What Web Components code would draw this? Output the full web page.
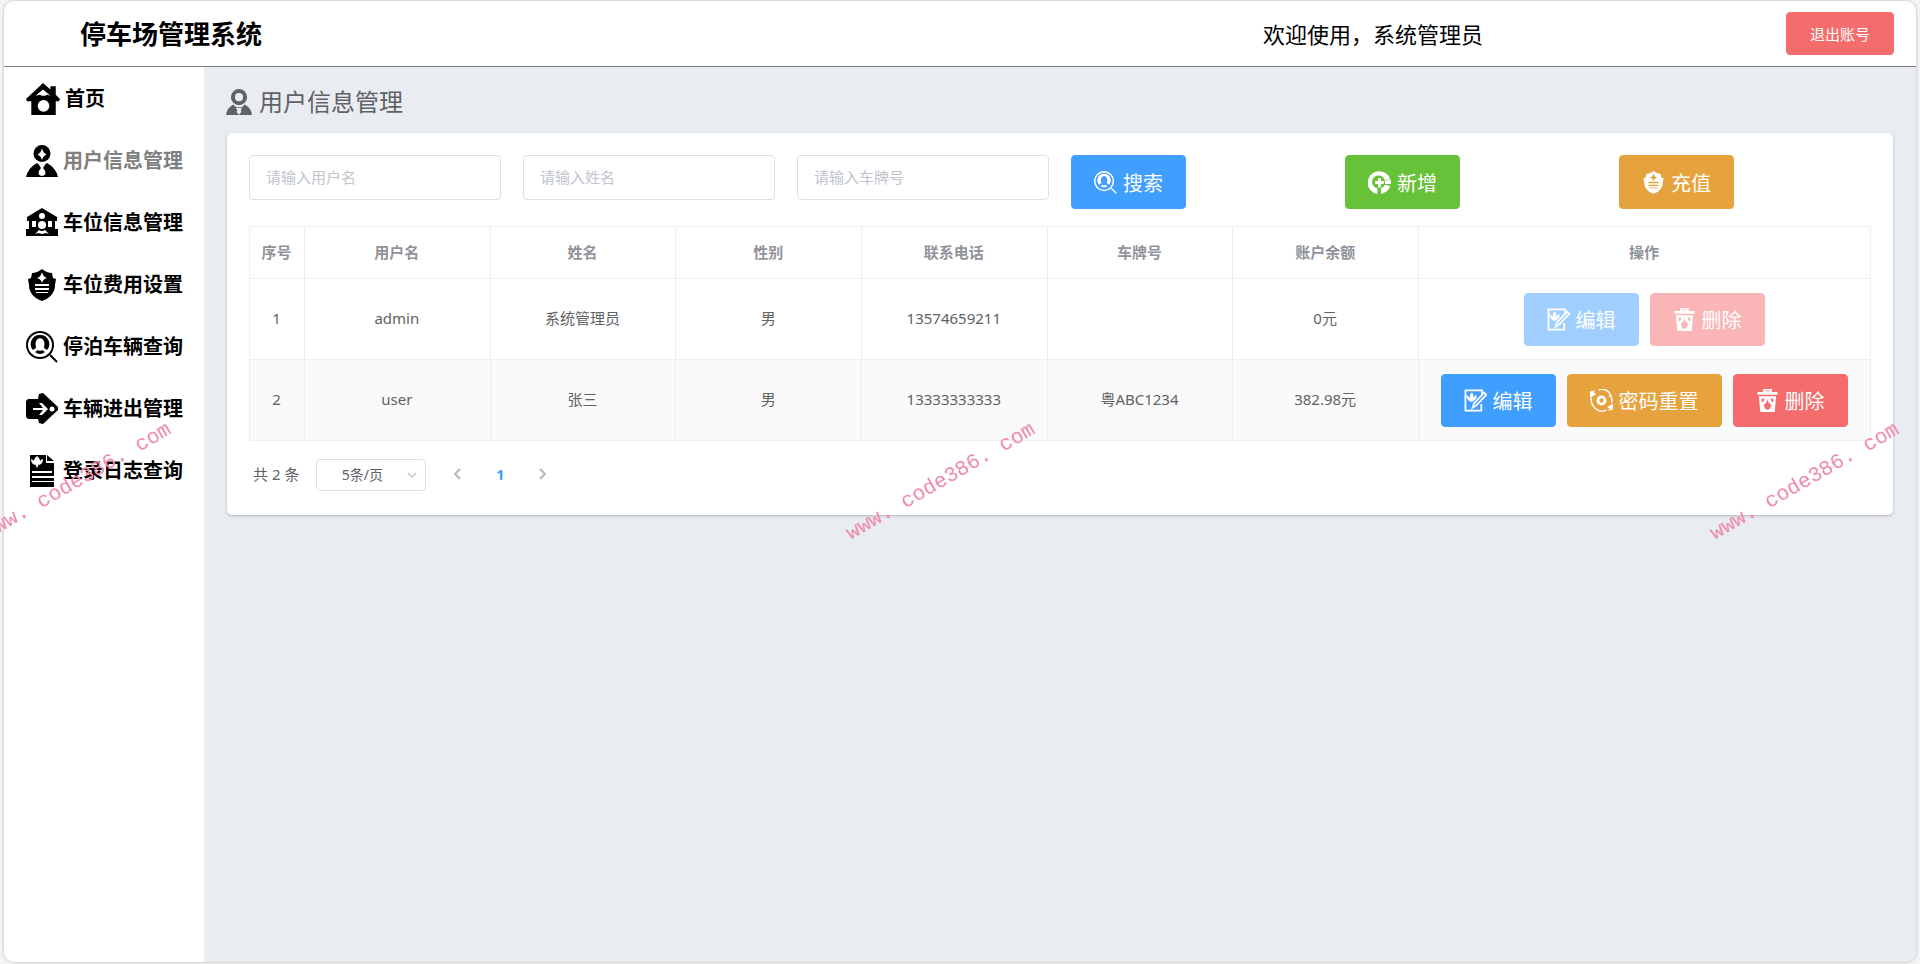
<!DOCTYPE html>
<html lang="zh-CN">
<head>
<meta charset="UTF-8">
<meta name="viewport" content="width=device-width, initial-scale=1">
<title>停车场管理系统</title>
<style>
    html {
        background: #f4f4f4;
    }
    body {
        margin: 0;
        font-family: "Noto Sans", "Noto Sans CJK SC", sans-serif;
        font-size: 15px;
        color: #606266;
    }
</style>
</head>
<body>
<parking-app></parking-app>

<script>
const ICONS = {
    home: `<path d="M16 1 23 7V4h5v8l4 4-1 2h-3v13H5V18H1l-1-2Z"/><path class="cut" d="m16 7-7 6 4-1 2 1h3l2-1 3 1Z"/><circle class="cut" cx="16.500" cy="22.500" r="5.500"/>`,
    user: `<circle cx="16" cy="8.500" r="8.500"/><path d="M0 32q2-9 11-14l5 4 5-4q9 5 11 14Z"/><path class="cut" d="M16 3q1 5 4.500 6.500Q17 11 16 15q-1-4-4.500-5.500Q15 8 16 3ZM13 20h6l-2 3q3 3 2.500 6Q18 31 16 31t-3.500-2q-.5-3 2.500-6Z"/>`,
    avatar: `<path fill-rule="evenodd" d="M16 0a10 10 0 1 1 0 20 10 10 0 0 1 0-20Zm0 5a5 5 0 1 0 0 10 5 5 0 0 0 0-10Z"/><path d="M0 32q1-9 9-13l3 3h8l3-3q8 4 9 13Z"/><path class="cut" d="M12 23h8l-2 3 1 2-3 4-3-4 1-2Z"/>`,
    house: `<path d="M16 1 31 10v4h-2v8h3v7H0v-7h3v-8H1v-4Z"/><circle class="cut" cx="16" cy="9" r="3"/><circle class="cut" cx="16" cy="18" r="4"/><path class="cut" d="M6 14h4v6H6Zm16 0h4v6h-4ZM9 27l4-4q3 2 6 0l4 4-3-1-4 1-4-1Z"/>`,
    shield: `<path d="M16 0q5 4 10 4l1 5 3 1-1 6q0 11-13 16Q3 27 3 16L2 10l3-1 1-5q5 0 10-4Z"/><path class="cut" d="M16 3q1 5 5 6-4 1-5 5-1-4-5-5 4-1 5-6ZM9 15h14v2H9Zm0 4h14v2H9Zm1 4h12v1H10Z"/>`,
    search: `<g fill="none" stroke="currentColor"><circle cx="14" cy="14" r="13" stroke-width="2"/><path stroke-width="2" d="m24 24 7 7"/></g><path fill-rule="evenodd" d="M14 4a9 9 0 0 1 7 15l-3-2q2-9-4-10-6 1-4 10l-3 2a9 9 0 0 1 7-15ZM9 21l3-2q2 2 4 0l3 2q-5 4-10 0Z"/>`,
    arrow: `<path d="M2 6h10l1-5 4-1 15 14v3L17 31l-4-1-1-4H2l-2-2V8Z"/><path d="M7 15h10l-4-5h3l6 6-6 6h-3l4-5H7Z" class="cut"/><circle class="cut" cx="26" cy="16" r="2.500"/>`,
    file: `<path d="M4 0h16v8h8v24H4ZM21 0l7 6h-7Z"/><path class="cut" d="M11 1q5 4 2 8l-2 4-2-4Q6 5 11 1ZM5 4q4 1 4 6-4-1-4-6Zm12 0q0 5-4 6 0-5 4-6ZM6 16h20v2H6Zm0 5h22v2H6Zm0 5h22v1H6Z"/>`,
    plus: `<path fill-rule="evenodd" d="M13 32A16 16 0 1 1 31 12h-8l-1-2a9 9 0 1 0-9 14Zm5 0v-8q4-1 5-5l8 2q-3 9-13 11Z"/><path d="M23 13h9v5h-8ZM14 10h4v4h4v4h-4v5h-4v-5h-4v-4h4Z"/>`,
    edit: `<g fill="none" stroke="currentColor" stroke-width="2.500"><path d="M25 9V2H2v28h22V21"/><path d="m28 5 3 3-14 15-5 3 2-6Z"/></g><path d="M11 5q4 4 1 8l5-5q2 5-4 9l-3 1q-7-3-7-10l6 4q-2-4 2-7Z"/>`,
    reset: `<g fill="none" stroke="currentColor" stroke-width="2"><path d="M12 1q14-3 18 11 1 4 0 7M2 12Q0 24 12 30q6 2 11-1"/><circle cx="16" cy="16" r="5" stroke-width="4"/></g><path d="M0 3v9l9-5-4-2 2-3ZM32 20l-8 5 3 2-2 3 7-1Z"/><circle cx="4" cy="21" r="1"/><circle cx="27" cy="10" r="1"/>`,
    trash: `<path d="M10 4V0h12v4h8v4H2V4Zm3-1h6V2h-6ZM4 10h24l-2 22H6Z"/><path class="cut" d="M16 14q1 6 5 8-1 7-5 7t-5-7q4-2 5-8ZM8 13l4 1-2 4H8Zm16 0-4 1 2 4h2Z"/>`
};

class ParkIcon extends HTMLElement {
    constructor() {
        super();
        this.attachShadow({ mode: "open" });
    }

    connectedCallback() {
        this.shadowRoot.innerHTML = `
            <style>
                :host {
                    display: block;
                    flex: none;
                    width: var(--icon-size, 32px);
                    height: var(--icon-size, 32px);
                }
                svg { display: block; width: 100%; height: 100%; fill: currentColor; }
                .cut { fill: var(--icon-cut, #fff); }
            </style>
            <svg viewBox="0 0 32 32" aria-hidden="true">${ICONS[this.getAttribute("name")] || ""}</svg>
        `;
    }
}
customElements.define("park-icon", ParkIcon);

class ParkButton extends HTMLElement {
    constructor() {
        super();
        this.attachShadow({ mode: "open" });
    }

    connectedCallback() {
        const icon = this.getAttribute("icon");
        this.shadowRoot.innerHTML = `
            <style>
                :host {
                    --tone: #409eff;
                    display: inline-block;
                    vertical-align: top;
                }
                :host([type="success"]) { --tone: #67c23a; }
                :host([type="warning"]) { --tone: #e6a23c; }
                :host([type="danger"]) { --tone: #f56c6c; }
                :host([disabled]) { --tone: #a0cfff; }
                :host([disabled][type="danger"]) { --tone: #fab6b6; }
                button {
                    --icon-size: 23px;
                    --icon-cut: var(--tone);
                    display: flex;
                    align-items: center;
                    gap: 6px;
                    height: var(--button-height, 54px);
                    padding: 0 22px;
                    border: 1px solid var(--tone);
                    border-radius: 4px;
                    background: var(--tone);
                    color: #fff;
                    font: 20px/28px "Noto Sans", "Noto Sans CJK SC", sans-serif;
                    white-space: nowrap;
                    cursor: pointer;
                }
                button:disabled { cursor: not-allowed; }
                .label { padding-top: 4px; }
                :host([plain]) button { height: 43px; padding: 0 23px; font-size: 15px; }
                :host([plain]) .label { padding-top: 0; }
            </style>
            <button type="button" ${this.hasAttribute("disabled") ? "disabled" : ""}>
                ${icon ? `<park-icon name="${icon}"></park-icon>` : ""}
                <span class="label"><slot></slot></span>
            </button>
        `;
    }
}
customElements.define("park-button", ParkButton);

class SearchField extends HTMLElement {
    constructor() {
        super();
        this.attachShadow({ mode: "open" });
    }

    connectedCallback() {
        const hint = this.getAttribute("placeholder") || "";
        this.shadowRoot.innerHTML = `
            <style>
                :host { display: block; }
                input {
                    display: block;
                    box-sizing: border-box;
                    width: 100%;
                    height: 45px;
                    padding: 0 16px 2px;
                    border: 1px solid #dcdfe6;
                    border-radius: 4px;
                    outline: none;
                    background: #fff;
                    color: #606266;
                    font: 15px "Noto Sans", "Noto Sans CJK SC", sans-serif;
                }
                input::placeholder { color: #c0c4cc; }
                input:focus { border-color: #409eff; }
            </style>
            <input type="text" placeholder="${hint}" aria-label="${hint}">
        `;
    }
}
customElements.define("search-field", SearchField);

class TopBar extends HTMLElement {
    constructor() {
        super();
        this.attachShadow({ mode: "open" });
        this.shadowRoot.innerHTML = `
            <style>
                :host {
                    display: grid;
                    grid-template-columns: 15fr 8fr;
                    align-items: center;
                    height: 65px;
                    padding: 0 22px 0 76px;
                    border-bottom: 1px solid #808080;
                    background: #fff;
                    color: #000;
                }
                h1 { margin: 0; font-size: 26px; line-height: 36px; font-weight: 700; }
                .account {
                    display: flex;
                    align-items: center;
                    justify-content: space-between;
                    font-size: 22px;
                    line-height: 32px;
                }
            </style>
            <h1>停车场管理系统</h1>
            <div class="account">
                <slot></slot>
                <park-button type="danger" plain>退出账号</park-button>
            </div>
        `;
    }
}
customElements.define("top-bar", TopBar);

class MenuLink extends HTMLElement {
    constructor() {
        super();
        this.attachShadow({ mode: "open" });
    }

    connectedCallback() {
        this.shadowRoot.innerHTML = `
            <style>
                :host { display: block; }
                a {
                    display: flex;
                    align-items: center;
                    gap: 5px;
                    height: 62px;
                    padding: 0 22px;
                    color: #000;
                    font-size: 20px;
                    line-height: 28px;
                    font-weight: 700;
                    text-decoration: none;
                    white-space: nowrap;
                }
                :host([icon="home"]) a { --icon-size: 34px; }
                :host([active]) span { color: #808080; }
            </style>
            <a href="#"><park-icon name="${this.getAttribute("icon")}"></park-icon><span><slot></slot></span></a>
        `;
    }
}
customElements.define("menu-link", MenuLink);

class SideMenu extends HTMLElement {
    constructor() {
        super();
        this.attachShadow({ mode: "open" });
        this.shadowRoot.innerHTML = `
            <style>
                :host { display: block; background: #fff; }
                nav { padding-top: 1px; }
            </style>
            <nav><slot></slot></nav>
        `;
    }
}
customElements.define("side-menu", SideMenu);

const USERS = [
    { username: "admin", name: "系统管理员", sex: "男", phone: "13574659211", plate: "", balance: "0元", locked: true },
    { username: "user", name: "张三", sex: "男", phone: "13333333333", plate: "粤ABC1234", balance: "382.98元" }
];

class UserTable extends HTMLElement {
    constructor() {
        super();
        this.attachShadow({ mode: "open" });
    }

    connectedCallback() {
        this.shadowRoot.innerHTML = `
            <style>
                :host { display: block; }
                table {
                    width: 100%;
                    border-collapse: collapse;
                    table-layout: fixed;
                    font-size: 15px;
                    line-height: 24px;
                    text-align: center;
                }
                .index { width: 55px; }
                .operate { width: 452px; }
                th, td { padding: 0 1px 2px 0; border: 1px solid #ebeef5; }
                th { height: 49px; color: #909399; font-weight: 700; }
                td { height: 78px; }
                td:last-child { padding-bottom: 0; }
                tbody tr:nth-child(even) { background: #fafafa; }
                .actions {
                    --button-height: 53px;
                    display: flex;
                    justify-content: center;
                    gap: 11px;
                }
            </style>
            <table>
                <colgroup>
                    <col class="index"><col><col><col><col><col><col><col class="operate">
                </colgroup>
                <thead>
                    <tr>
                        <th>序号</th><th>用户名</th><th>姓名</th><th>性别</th>
                        <th>联系电话</th><th>车牌号</th><th>账户余额</th><th>操作</th>
                    </tr>
                </thead>
                <tbody>${USERS.map((user, i) => this.row(user, i)).join("")}</tbody>
            </table>
        `;
    }

    row(user, i) {
        const lock = user.locked ? "disabled" : "";
        // the administrator account has no password reset
        const reset = user.locked ? "" : `<park-button type="warning" icon="reset">密码重置</park-button>`;
        return `
            <tr>
                <td>${i + 1}</td>
                <td>${user.username}</td>
                <td>${user.name}</td>
                <td>${user.sex}</td>
                <td>${user.phone}</td>
                <td>${user.plate}</td>
                <td>${user.balance}</td>
                <td>
                    <div class="actions">
                        <park-button icon="edit" ${lock}>编辑</park-button>
                        ${reset}
                        <park-button type="danger" icon="trash" ${lock}>删除</park-button>
                    </div>
                </td>
            </tr>
        `;
    }
}
customElements.define("user-table", UserTable);

class PageNav extends HTMLElement {
    constructor() {
        super();
        this.attachShadow({ mode: "open" });
        this.shadowRoot.innerHTML = `
            <style>
                :host { display: flex; align-items: center; padding-left: 4px; }
                .total { padding-bottom: 4px; }
                .size { position: relative; margin: 0 11px 0 17px; }
                select {
                    display: block;
                    appearance: none;
                    width: 110px;
                    height: 32px;
                    padding: 0 24px 2px 6px;
                    border: 1px solid #dcdfe6;
                    border-radius: 4px;
                    background: #fff;
                    color: #606266;
                    font: 14px "Noto Sans", "Noto Sans CJK SC", sans-serif;
                    text-align: center;
                    text-align-last: center;
                }
                svg { display: block; fill: none; stroke: #c0c4cc; stroke-width: 1.500; }
                .size svg { position: absolute; right: 9px; top: 11px; pointer-events: none; }
                button {
                    display: flex;
                    align-items: center;
                    justify-content: center;
                    width: 42px;
                    height: 32px;
                    padding: 0 0 3px;
                    border: 0;
                    background: none;
                    color: #409eff;
                    font: 700 15px "Noto Sans", "Noto Sans CJK SC", sans-serif;
                }
                button svg { stroke: #b4b7bd; stroke-width: 2; }
            </style>
            <span class="total">共 2 条</span>
            <div class="size">
                <select aria-label="每页条数">
                    <option>5条/页</option>
                    <option>10条/页</option>
                    <option>20条/页</option>
                </select>
                <svg width="10" height="10" viewBox="0 0 10 10"><path d="m1 3 4 4 4-4"/></svg>
            </div>
            <button type="button" aria-label="上一页" disabled><svg width="12" height="12" viewBox="0 0 12 12"><path d="M8 1 3 6l5 5"/></svg></button>
            <button type="button">1</button>
            <button type="button" aria-label="下一页" disabled><svg width="12" height="12" viewBox="0 0 12 12"><path d="m4 1 5 5-5 5"/></svg></button>
        `;
    }
}
customElements.define("page-nav", PageNav);

class WaterMark extends HTMLElement {
    constructor() {
        super();
        this.attachShadow({ mode: "open" });
        this.shadowRoot.innerHTML = `
            <style>
                :host {
                    position: absolute;
                    inset: 0;
                    overflow: hidden;
                    pointer-events: none;
                }
                span {
                    position: absolute;
                    top: 50%;
                    left: 49%;
                    transform: translate(-50%, -50%) rotate(-30deg);
                    color: #f08cac;
                    font: 21px/28px "Liberation Mono", monospace;
                    white-space: nowrap;
                }
                .start { left: 4%; }
                .end { left: 94%; }
            </style>
            <span class="start">www. code386. com</span>
            <span>www. code386. com</span>
            <span class="end">www. code386. com</span>
        `;
    }
}
customElements.define("water-mark", WaterMark);

class ParkingApp extends HTMLElement {
    constructor() {
        super();
        this.attachShadow({ mode: "open" });
        this.shadowRoot.innerHTML = `
            <style>
                :host {
                    position: relative;
                    display: block;
                    box-sizing: border-box;
                    min-height: 100vh;
                    padding: 1px 4px 2px;
                }
                .frame {
                    display: flex;
                    flex-direction: column;
                    min-height: calc(100vh - 3px);
                    border-radius: 10px;
                    overflow: hidden;
                    box-shadow: 0 0 3px rgba(0, 0, 0, 0.3);
                }
                .body {
                    flex: 1;
                    display: grid;
                    grid-template-columns: 200px minmax(0, 1fr);
                }
                main { padding: 5px 23px 23px 22px; background: #e9ecf1; }
                h2 {
                    --icon-size: 26px;
                    --icon-cut: #e9ecf1;
                    display: flex;
                    align-items: center;
                    gap: 7px;
                    height: 60px;
                    margin: 0;
                    font-size: 24px;
                    line-height: 34px;
                    font-weight: 400;
                }
                .card {
                    display: flex;
                    flex-direction: column;
                    margin: 1px 0 0 1px;
                    padding: 22px 22px 24px;
                    border-radius: 5px;
                    background: #fff;
                    box-shadow: 0 1px 3px rgba(0, 0, 0, 0.24);
                }
                .filters {
                    display: grid;
                    grid-template-columns: repeat(6, minmax(0, 1fr));
                    gap: 22px;
                    margin-bottom: 17px;
                }
                page-nav { margin-top: 18px; }
            </style>
            <div class="frame">
                <top-bar>欢迎使用，系统管理员</top-bar>
                <div class="body">
                    <side-menu>
                        <menu-link icon="home">首页</menu-link>
                        <menu-link icon="user" active>用户信息管理</menu-link>
                        <menu-link icon="house">车位信息管理</menu-link>
                        <menu-link icon="shield">车位费用设置</menu-link>
                        <menu-link icon="search">停泊车辆查询</menu-link>
                        <menu-link icon="arrow">车辆进出管理</menu-link>
                        <menu-link icon="file">登录日志查询</menu-link>
                    </side-menu>
                    <main>
                        <h2><park-icon name="avatar"></park-icon>用户信息管理</h2>
                        <section class="card">
                            <div class="filters">
                                <search-field placeholder="请输入用户名"></search-field>
                                <search-field placeholder="请输入姓名"></search-field>
                                <search-field placeholder="请输入车牌号"></search-field>
                                <park-button icon="search">搜索</park-button>
                                <park-button type="success" icon="plus">新增</park-button>
                                <park-button type="warning" icon="shield">充值</park-button>
                            </div>
                            <user-table></user-table>
                            <page-nav></page-nav>
                        </section>
                    </main>
                </div>
            </div>
            <water-mark></water-mark>
        `;
    }
}
customElements.define("parking-app", ParkingApp);
</script>
</body>
</html>
